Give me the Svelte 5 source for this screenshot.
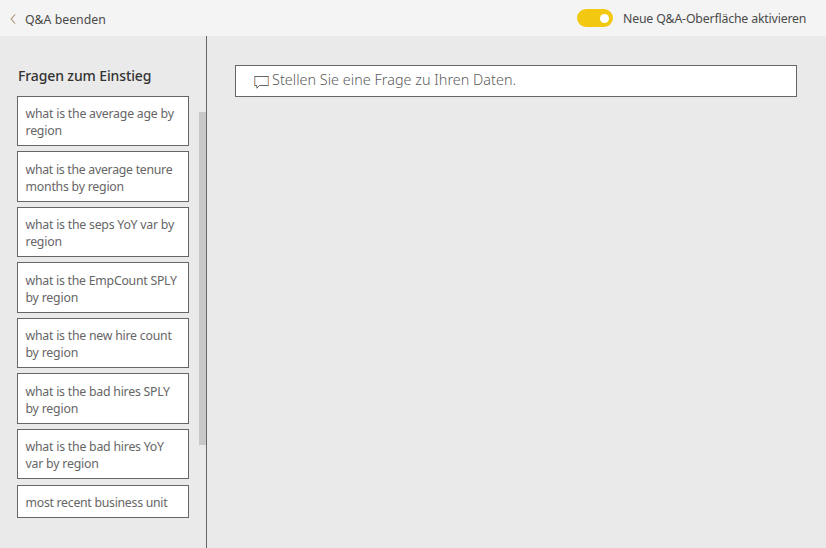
<script>
  // Each line carries its own tracking, in pixels.
  const questions = [
    [['what is the average age by', -0.22], ['region', -0.2]],
    [['what is the average tenure', -0.28], ['months by region', -0.22]],
    [['what is the seps YoY var by', -0.23], ['region', -0.2]],
    [['what is the EmpCount SPLY', -0.25], ['by region', -0.2]],
    [['what is the new hire count', -0.23], ['by region', -0.2]],
    [['what is the bad hires SPLY', -0.23], ['by region', -0.2]],
    [['what is the bad hires YoY', -0.22], ['var by region', -0.2]],
    [['most recent business unit', -0.28]]
  ];
</script>

<div class="page">
  <header>
    <button class="back">
      <svg width="6" height="10" viewBox="0 0 6 10">
        <path d="M5.4 .5 1.5 5 5.4 9.5" fill="none" stroke="#a9a4c0" stroke-width=".8" />
        <path d="M4.8 .5 .9 5 4.8 9.5" fill="none" stroke="#b08a50" stroke-width=".9" />
      </svg>
      <span>Q&amp;A beenden</span>
    </button>
    <div class="switch">
      <span class="track"><i></i></span>
      <span class="label">Neue Q&amp;A-Oberfläche aktivieren</span>
    </div>
  </header>
  <div class="body">
    <aside>
      <div class="list">
        <h2><span>Fragen zum Einstieg</span></h2>
        {#each questions as lines}
          <button class="card">
            {#each lines as [text, spacing]}
              <span class="line" style:letter-spacing="{spacing}px">{text}</span>
            {/each}
          </button>
        {/each}
      </div>
      <div class="bar"><i></i></div>
    </aside>
    <main>
      <div class="ask">
        <svg width="16" height="14" viewBox="0 0 16 14">
          <path d="M.5 .5H14.5V9.5H5.5L2.8 12.2V9.5H.5Z" fill="none" stroke="#666" />
          <path d="M.5 1V10" stroke="#d0926f" /><path d="M1.5 1V9" stroke="#b9e4fa" />
          <path d="M14.5 1V9" stroke="#d79a78" /><path d="M13.5 1V9" stroke="#d5eefa" />
        </svg>
        <span>Stellen Sie eine Frage zu Ihren Daten.</span>
      </div>
    </main>
  </div>
</div>

<style>
  .page {
    width: 826px;
    height: 548px;
    overflow: hidden;
    display: flex;
    flex-direction: column;
    background: #eaeaea;
    font-family: "Noto Sans", "Open Sans", sans-serif;
    color: #4a4a4a;
  }
  button { font: inherit; color: inherit; border: 0; background: none; padding: 0; text-align: left; }
  span { white-space: nowrap; }
  header {
    height: 36px;
    flex: none;
    box-sizing: border-box;
    background: #f4f4f4;
    display: flex;
    justify-content: space-between;
    padding: 0 20px 0 10px;
    font-size: 12.3px;
  }
  .back { display: flex; align-items: center; gap: 9px; padding-top: 2px; }
  .switch { display: flex; align-items: center; gap: 10px; }
  .label { width: 183px; letter-spacing: -0.17px; }
  .track {
    width: 36px;
    height: 18px;
    box-sizing: border-box;
    padding: 4.5px;
    border-radius: 9px;
    background: #f2c811;
    display: flex;
    justify-content: flex-end;
  }
  .track i { width: 9px; height: 9px; border-radius: 50%; background: #fff; }
  .body { flex: 1; display: flex; min-height: 0; }
  aside { width: 206px; border-right: 1px solid #666; display: flex; }
  .list {
    width: 199px;
    box-sizing: border-box;
    padding: 29.8px 10px 0 17px;
    display: flex;
    flex-direction: column;
    gap: 5.17px;
  }
  h2 { margin: 0 0 4.85px 1px; height: 20px; line-height: 20px; font-size: 14px; font-weight: 500; color: #333; letter-spacing: -0.12px; }
  .card {
    flex: none;
    box-sizing: border-box;
    border: 1px solid #666;
    background: #fff;
    padding: 8.2px 7.5px 6px;
    color: #666;
    font-size: 12.3px;
    line-height: 17.1px;
    display: flex;
    flex-direction: column;
    align-items: flex-start;
  }
  .bar { width: 7px; padding-top: 76px; }
  .bar i { display: block; height: 333px; background: #c8c8c8; }
  main { flex: 1; padding: 29px 29px 0 28px; }
  .ask {
    height: 32px;
    box-sizing: border-box;
    border: 1px solid #666;
    background: #fff;
    padding-left: 18px;
    display: flex;
    align-items: center;
    font-size: 14.4px;
    font-weight: 300;
    letter-spacing: 0.02px;
    color: #5c5c5c;
  }
  .ask span { margin-top: -3px; }
  .ask svg { margin: 4px 2px 0 0; }
</style>
